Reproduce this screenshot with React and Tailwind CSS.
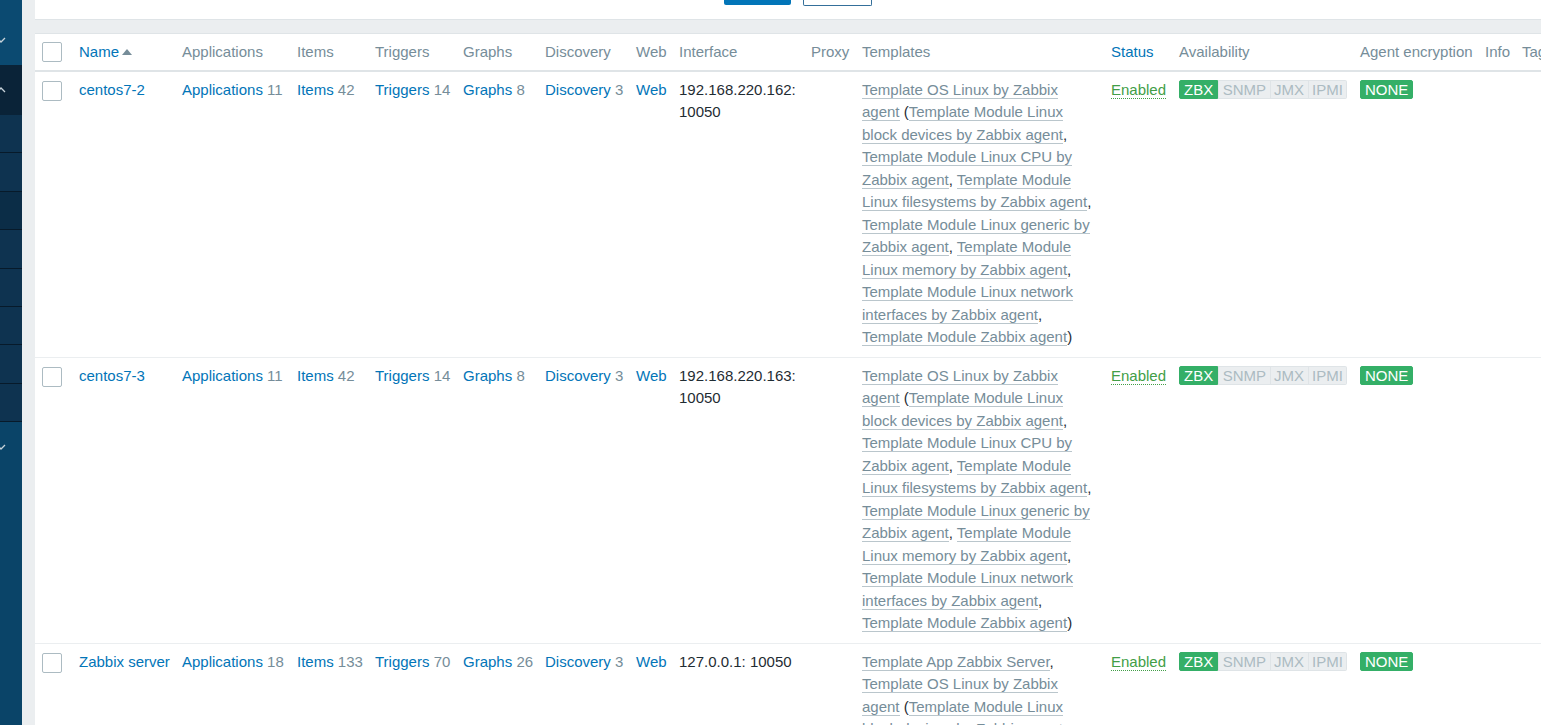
import React from 'react';

const linuxChildren = [
  'Template Module Linux block devices by Zabbix agent',
  'Template Module Linux CPU by Zabbix agent',
  'Template Module Linux filesystems by Zabbix agent',
  'Template Module Linux generic by Zabbix agent',
  'Template Module Linux memory by Zabbix agent',
  'Template Module Linux network interfaces by Zabbix agent',
  'Template Module Zabbix agent',
];

const hosts = [
  {
    name: 'centos7-2',
    apps: 11,
    items: 42,
    triggers: 14,
    graphs: 8,
    discovery: 3,
    iface: '192.168.220.162: 10050',
    extra: [],
  },
  {
    name: 'centos7-3',
    apps: 11,
    items: 42,
    triggers: 14,
    graphs: 8,
    discovery: 3,
    iface: '192.168.220.163: 10050',
    extra: [],
  },
  {
    name: 'Zabbix server',
    apps: 18,
    items: 133,
    triggers: 70,
    graphs: 26,
    discovery: 3,
    iface: '127.0.0.1: 10050',
    extra: ['Template App Zabbix Server'],
  },
];

const columns = [
  { label: '', w: 'w-[38px]' },
  { label: 'Name', w: 'w-[103px]', sort: true },
  { label: 'Applications', w: 'w-[115px]' },
  { label: 'Items', w: 'w-[78px]' },
  { label: 'Triggers', w: 'w-[88px]' },
  { label: 'Graphs', w: 'w-[82px]' },
  { label: 'Discovery', w: 'w-[91px]' },
  { label: 'Web', w: 'w-[43px]' },
  { label: 'Interface', w: 'w-[132px]' },
  { label: 'Proxy', w: 'w-[51px]' },
  { label: 'Templates', w: 'w-[249px]' },
  { label: 'Status', w: 'w-[68px]', link: true },
  { label: 'Availability', w: 'w-[181px]' },
  { label: 'Agent encryption', w: 'w-[125px]' },
  { label: 'Info', w: 'w-[37px]' },
  { label: 'Tags', w: 'w-[60px]' },
];

function Checkbox({ className = '' }) {
  return <div className={`w-5 h-5 rounded-[2px] border border-[#acbbc2] bg-white ${className}`} />;
}

function Chevron({ up = false }) {
  return (
    <svg width="8" height="8" viewBox="0 0 8 8" className="block">
      <path
        d={up ? 'M-3 6 L1 2 L5 6' : 'M-3 2 L1 6 L5 2'}
        fill="none"
        stroke="#c8d3da"
        strokeWidth="1.3"
      />
    </svg>
  );
}

function Sidebar() {
  const rows = [0, 1, 2, 3, 4, 5, 6, 7];
  return (
    <div className="w-[22px] shrink-0 flex flex-col bg-[#0a4468]">
      <div className="h-[65px] bg-[#0b4a71] flex items-end pb-[21px]">
        <Chevron />
      </div>
      <div className="h-[50px] bg-[#0a2338] flex items-center">
        <Chevron up />
      </div>
      {rows.map((r) => (
        <div
          key={r}
          className={`h-[38.4px] border-b border-[#071a2a] ${r === 2 ? 'bg-[#0b2d47]' : 'bg-[#0e3350]'}`}
        />
      ))}
      <div className="pt-[21px]">
        <Chevron />
      </div>
    </div>
  );
}

function Tpl({ children }) {
  return <a className="text-[#768d99] border-b border-[#bac6cc]">{children}</a>;
}

function Templates({ extra }) {
  return (
    <>
      {extra.map((t) => (
        <React.Fragment key={t}>
          <Tpl>{t}</Tpl>,{' '}
        </React.Fragment>
      ))}
      <Tpl>Template OS Linux by Zabbix agent</Tpl> (
      {linuxChildren.map((t, i) => (
        <React.Fragment key={t}>
          <Tpl>{t}</Tpl>
          {i < linuxChildren.length - 1 ? ', ' : ''}
        </React.Fragment>
      ))}
      )
    </>
  );
}

function Availability() {
  const grey = 'bg-[#ebeef0] text-[#acbbc2] border-[#dfe4e7]';
  return (
    <div className="flex mt-px">
      <span className="h-[19px] px-[4px] border border-[#34af67] bg-[#34af67] text-white leading-[17px] rounded-l-[2px]">ZBX</span>
      <span className={`h-[19px] px-[3.5px] border ${grey} leading-[17px]`}>SNMP</span>
      <span className={`h-[19px] px-[3.5px] border border-l-0 ${grey} leading-[17px]`}>JMX</span>
      <span className={`h-[19px] px-[3.5px] border border-l-0 ${grey} leading-[17px] rounded-r-[2px]`}>IPMI</span>
    </div>
  );
}

function Count({ label, n }) {
  return (
    <>
      <a className="text-[#0275b8]">{label}</a> <span className="text-[#768d99]">{n}</span>
    </>
  );
}

export default function App() {
  const td = 'align-top px-[6px] pt-[7px] pb-[8px]';
  return (
    <div className="flex h-screen w-screen overflow-hidden bg-[#ebeef0] font-['Liberation_Sans',Arial,sans-serif] text-[15px] leading-[22.5px] text-[#1f2c33]">
      <Sidebar />
      <div className="flex-1 min-w-0 pl-[13px] flex flex-col">
        <div className="h-[20px] shrink-0 bg-white border-b border-[#dfe4e7] flex items-start pl-[689px]">
          <div className="w-[67px] h-[5px] bg-[#0275b8] rounded-b-[2px]" />
          <div className="w-[69px] h-[6px] ml-[12px] border border-t-0 border-[#346f9a] rounded-b-[2px] bg-white" />
        </div>
        <div className="h-[13px] shrink-0" />
        <div className="flex-1 bg-white border-t border-[#dfe4e7] overflow-hidden">
          <table className="table-fixed border-collapse w-[1541px]">
            <colgroup>
              {columns.map((c, i) => (
                <col key={i} className={c.w} />
              ))}
            </colgroup>
            <thead>
              <tr className="border-b-2 border-[#dfe4e7]">
                {columns.map((c, i) => (
                  <th
                    key={i}
                    className={`text-left font-normal whitespace-nowrap align-top px-[6px] pt-[7px] pb-[6px] ${
                      c.sort || c.link ? 'text-[#0275b8]' : 'text-[#768d99]'
                    } ${i === 0 ? 'pl-[7px]' : ''}`}
                  >
                    {i === 0 ? (
                      <Checkbox className="mt-px" />
                    ) : (
                      <>
                        {c.label}
                        {c.sort && (
                          <svg width="10" height="6" viewBox="0 0 10 6" className="inline-block ml-[3px] align-[2px]">
                            <path d="M0 6 L5 0 L10 6 Z" fill="#768d99" />
                          </svg>
                        )}
                      </>
                    )}
                  </th>
                ))}
              </tr>
            </thead>
            <tbody>
              {hosts.map((h) => (
                <tr key={h.name} className="border-b border-[#ebeef0]">
                  <td className={`${td} pl-[7px]`}>
                    <Checkbox className="mt-[2px]" />
                  </td>
                  <td className={`${td} whitespace-nowrap`}>
                    <a className="text-[#0275b8]">{h.name}</a>
                  </td>
                  <td className={`${td} whitespace-nowrap`}>
                    <Count label="Applications" n={h.apps} />
                  </td>
                  <td className={`${td} whitespace-nowrap`}>
                    <Count label="Items" n={h.items} />
                  </td>
                  <td className={`${td} whitespace-nowrap`}>
                    <Count label="Triggers" n={h.triggers} />
                  </td>
                  <td className={`${td} whitespace-nowrap`}>
                    <Count label="Graphs" n={h.graphs} />
                  </td>
                  <td className={`${td} whitespace-nowrap`}>
                    <Count label="Discovery" n={h.discovery} />
                  </td>
                  <td className={td}>
                    <a className="text-[#0275b8]">Web</a>
                  </td>
                  <td className={td}>{h.iface}</td>
                  <td className={td}></td>
                  <td className={td}>
                    <Templates extra={h.extra} />
                  </td>
                  <td className={td}>
                    <a className="text-[#429e47] border-b border-dotted border-[#429e47]">Enabled</a>
                  </td>
                  <td className={td}>
                    <Availability />
                  </td>
                  <td className={td}>
                    <div className="flex mt-px">
                      <span className="h-[19px] px-[4px] border border-[#34af67] bg-[#34af67] text-white leading-[17px] rounded-[2px]">NONE</span>
                    </div>
                  </td>
                  <td className={td}></td>
                  <td className={td}></td>
                </tr>
              ))}
            </tbody>
          </table>
        </div>
      </div>
    </div>
  );
}
